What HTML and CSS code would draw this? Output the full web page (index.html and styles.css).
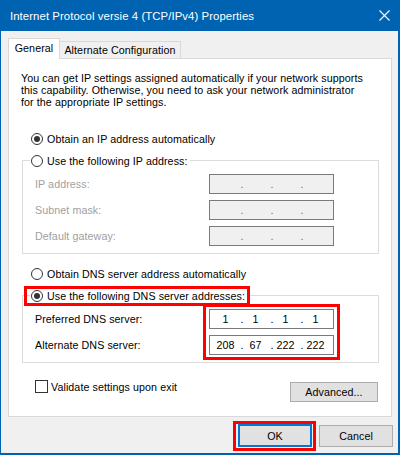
FILE: index.html
```html
<!DOCTYPE html>
<html lang="en">
<head>
<meta charset="utf-8">
<title>Internet Protocol versie 4 (TCP/IPv4) Properties</title>
<link rel="stylesheet" href="styles.css">
</head>
<body>
<div class="window">
  <div class="titlebar">
    <span class="title">Internet Protocol versie 4 (TCP/IPv4) Properties</span>
    <svg class="close" width="11" height="11" viewBox="0 0 11 11"><path d="M0.5 0.5L10.5 10.5M10.5 0.5L0.5 10.5" stroke="#fff" stroke-width="1.1" fill="none"/></svg>
  </div>
  <div class="content">
    <div class="tabs">
      <div class="tab active">General</div>
      <div class="tab alt">Alternate Configuration</div>
    </div>
    <div class="panel">
      <p class="intro">You can get IP settings assigned automatically if your network supports<br>this capability. Otherwise, you need to ask your network administrator<br>for the appropriate IP settings.</p>
      <div class="radio-row first"><span class="radio checked"></span><span>Obtain an IP address automatically</span></div>
      <fieldset class="group">
        <legend><span class="legend-inner"><span class="radio"></span><span>Use the following IP address:</span></span></legend>
        <div class="row disabled"><span class="label">IP address:</span><span class="ip off"><span class="oct"></span><span class="dot">.</span><span class="oct"></span><span class="dot">.</span><span class="oct"></span><span class="dot">.</span><span class="oct"></span></span></div>
        <div class="row disabled"><span class="label">Subnet mask:</span><span class="ip off"><span class="oct"></span><span class="dot">.</span><span class="oct"></span><span class="dot">.</span><span class="oct"></span><span class="dot">.</span><span class="oct"></span></span></div>
        <div class="row disabled"><span class="label">Default gateway:</span><span class="ip off"><span class="oct"></span><span class="dot">.</span><span class="oct"></span><span class="dot">.</span><span class="oct"></span><span class="dot">.</span><span class="oct"></span></span></div>
      </fieldset>
      <div class="radio-row second"><span class="radio"></span><span>Obtain DNS server address automatically</span></div>
      <fieldset class="group">
        <legend><span class="legend-inner"><span class="radio checked"></span><span>Use the following DNS server addresses:</span></span></legend>
        <div class="row"><span class="label">Preferred DNS server:</span><span class="ip"><span class="oct">1</span><span class="dot">.</span><span class="oct">1</span><span class="dot">.</span><span class="oct">1</span><span class="dot">.</span><span class="oct">1</span></span></div>
        <div class="row"><span class="label">Alternate DNS server:</span><span class="ip"><span class="oct">208</span><span class="dot">.</span><span class="oct">67</span><span class="dot">.</span><span class="oct">222</span><span class="dot">.</span><span class="oct">222</span></span></div>
      </fieldset>
      <div class="check-row">
        <label class="check"><span class="checkbox"></span><span>Validate settings upon exit</span></label>
        <button class="btn advanced">Advanced...</button>
      </div>
    </div>
    <div class="buttons">
      <button class="btn ok">OK</button>
      <button class="btn cancel">Cancel</button>
    </div>
  </div>
  <div class="mark mark-radio"></div>
  <div class="mark mark-fields"></div>
  <div class="mark mark-ok"></div>
</div>
</body>
</html>
```
FILE: styles.css
```css
* { box-sizing: border-box; }
html, body { margin: 0; padding: 0; background: #fff; }
body {
  font-family: "Liberation Sans", Arial, sans-serif;
  font-size: 10.7px;
  letter-spacing: 0.08px;
  line-height: 12px;
  color: #000;
}
.window {
  position: relative;
  width: 400px;
  height: 455px;
  background: #f0f0f0;
  border-left: 1px solid #0063b1;
  border-right: 2px solid #0063b1;
  border-bottom: 2px solid #0063b1;
}
.titlebar {
  height: 31px;
  background: #0063b1;
  color: #fff;
  display: flex;
  align-items: center;
  justify-content: space-between;
  padding: 0 8px 0 9px;
}
.title {
  white-space: nowrap;
  font-size: 11.35px;
  line-height: 14px;
}
.close { display: block; }
.content { padding: 7px 6px 0 7px; }
.tabs {
  display: flex;
  align-items: flex-end;
  height: 20px;
}
.tab {
  border: 1px solid #d9d9d9;
  border-bottom: none;
  background: #f0f0f0;
  text-align: center;
  white-space: nowrap;
}
.tab.active {
  position: relative;
  z-index: 1;
  width: 52px;
  height: 21px;
  margin-bottom: -1px;
  background: #fff;
  line-height: 19px;
}
.tab.alt {
  width: 121px;
  height: 17px;
  border-left: none;
  line-height: 16px;
}
.panel {
  height: 359px;
  background: #fff;
  border: 1px solid #d9d9d9;
}
.intro {
  margin: 13px 0 0 12px;
  white-space: nowrap;
}
.radio-row {
  display: flex;
  align-items: center;
  gap: 4px;
  height: 14px;
  padding-left: 22px;
  white-space: nowrap;
}
.radio-row.first { margin-top: 24px; }
.radio-row.second { margin-top: 13px; }
.radio {
  width: 12px;
  height: 12px;
  border: 1px solid #333;
  border-radius: 50%;
  background: #fff;
  display: flex;
  align-items: center;
  justify-content: center;
  flex: none;
}
.radio.checked::after {
  content: "";
  width: 6px;
  height: 6px;
  border-radius: 50%;
  background: #333;
}
.group {
  margin: 7px 12px 0 13px;
  border: 1px solid #dcdcdc;
  padding: 6px 0 7px 0;
  min-width: 0;
}
.group legend {
  margin-left: 7px;
  padding: 0 2px 0 1px;
}
.legend-inner {
  display: flex;
  align-items: center;
  gap: 4px;
  height: 15px;
  white-space: nowrap;
}
.row {
  display: flex;
  align-items: center;
  height: 20px;
  padding-left: 12px;
  white-space: nowrap;
}
.row + .row { margin-top: 6px; }
.row.disabled .label { color: #a0a0a0; }
.label { width: 174px; flex: none; }
.ip {
  width: 125px;
  height: 20px;
  border: 1px solid #7a7a7a;
  background: #fff;
  display: flex;
  align-items: center;
  padding-left: 5px;
  line-height: 18px;
}
.ip.off { background: #f0f0f0; }
.ip.off .dot { color: #6d6d7d; }
.oct { width: 24px; padding-right: 3px; text-align: center; }
.dot { width: 6px; text-align: center; }
.check-row {
  margin-top: 17px;
  display: flex;
  justify-content: space-between;
  align-items: flex-start;
  padding: 0 13px 0 26px;
}
.check {
  display: flex;
  align-items: center;
  gap: 3px;
  height: 13px;
  white-space: nowrap;
}
.checkbox {
  width: 13px;
  height: 13px;
  border: 1px solid #333;
  background: #fff;
  flex: none;
}
.btn {
  font: inherit;
  letter-spacing: inherit;
  color: #000;
  background: #e1e1e1;
  border: 1px solid #adadad;
  padding: 0;
  margin: 0;
  text-align: center;
}
.advanced {
  width: 88px;
  height: 20px;
  margin-top: 2px;
  line-height: 18px;
}
.buttons {
  display: flex;
  justify-content: flex-end;
  align-items: flex-start;
  gap: 7px;
  margin-top: 7px;
  margin-right: -1px;
}
.ok {
  width: 74px;
  height: 23px;
  border: 2px solid #0078d7;
}
.cancel {
  width: 74px;
  height: 22px;
  margin-top: 1px;
}
.mark {
  position: absolute;
  border: 3px solid #f00;
}
.mark-radio { left: 23px; top: 286px; width: 226px; height: 20px; }
.mark-fields { left: 202px; top: 304px; width: 137px; height: 56px; }
.mark-ok { left: 232px; top: 421px; width: 83px; height: 30px; }
```
